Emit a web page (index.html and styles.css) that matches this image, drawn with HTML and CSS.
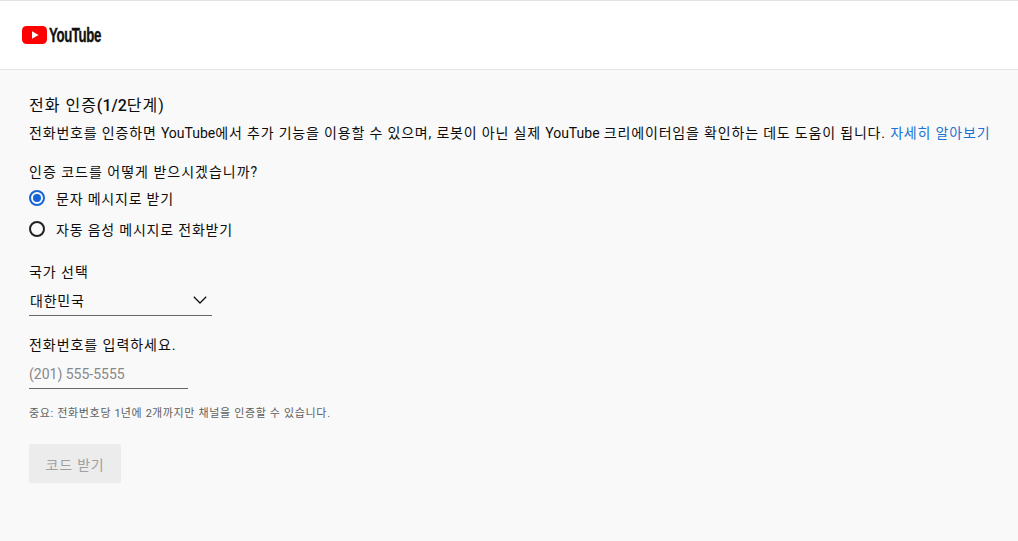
FILE: index.html
```html
<!DOCTYPE html>
<html lang="ko">
<head>
  <meta charset="UTF-8">
  <title>전화 인증</title>
  <link rel="stylesheet" href="styles.css">
</head>
<body>

  <header class="topBar">
    <a class="logo" href="#">
      <svg class="logoMark" width="25" height="18" viewBox="0 0 25 18">
        <rect width="25" height="18" rx="4.5" fill="#f00"/>
        <path d="M10 5.2v7.6L16.6 9z" fill="#fff"/>
      </svg>
      <span class="logoText">YouTube</span>
    </a>
  </header>

  <main class="content">
    <h1 class="title">전화 인증<span class="latin">(1/2</span>단계)</h1>
    <p class="intro">전화번호를 인증하면 <span class="latin">YouTube</span>에서 추가 기능을 이용할 수 있으며, 로봇이 아닌 실제 <span class="latin">YouTube</span> 크리에이터임을 확인하는 데도 도움이 됩니다. <a href="#">자세히 알아보기</a></p>

    <p class="label methodLabel">인증 코드를 어떻게 받으시겠습니까?</p>
    <div class="radioRow">
      <span class="radio checked"></span>
      <span>문자 메시지로 받기</span>
    </div>
    <div class="radioRow">
      <span class="radio"></span>
      <span>자동 음성 메시지로 전화받기</span>
    </div>

    <p class="label countryLabel">국가 선택</p>
    <div class="countrySelect">
      <span>대한민국</span>
      <svg width="14" height="8" viewBox="0 0 14 8"><path d="M.8.8 7 7l6.2-6.2" fill="none" stroke="#111" stroke-width="1.3"/></svg>
    </div>

    <p class="label phoneLabel">전화번호를 입력하세요.</p>
    <div class="phoneInput">(201) 555-5555</div>

    <p class="note">중요: 전화번호당 <span class="latin">1</span>년에 <span class="latin">2</span>개까지만 채널을 인증할 수 있습니다.</p>

    <button class="submitBtn" disabled>코드 받기</button>
  </main>

</body>
</html>
```

FILE: styles.css
```css
html, body {
  height: 100%;
}
body {
  margin: 0;
  background: #f9f9f9;
  color: #0d0d0d;
  font-family: Roboto, "Noto Sans CJK KR", sans-serif;
  font-size: 14px;
  overflow: hidden;
}
p, h1 {
  margin: 0;
}
.latin {
  letter-spacing: 0;
}
.topBar {
  height: 68px;
  background: #fff;
  border-top: 1px solid #e2e2e2;
  border-bottom: 1px solid #e2e2e2;
  display: flex;
  align-items: center;
  padding-left: 22px;
}
.logo {
  display: flex;
  align-items: center;
  gap: 2px;
  text-decoration: none;
  color: #111;
  margin-top: -1px;
}
.logoMark {
  display: block;
}
.logoText {
  display: block;
  width: 52px;
  font-family: "Liberation Sans", sans-serif;
  font-size: 21px;
  font-weight: 700;
  letter-spacing: -0.6px;
  line-height: 24px;
  -webkit-text-stroke: 0.4px #111;
  transform: scaleX(0.63);
  transform-origin: left center;
}
.content {
  padding: 25px 29px 0;
}
.title {
  font-size: 16px;
  font-weight: 400;
  line-height: 22px;
  letter-spacing: 1px;
}
.title .latin {
  font-weight: 500;
}
.intro {
  line-height: 20px;
  margin-top: 6px;
  white-space: nowrap;
  letter-spacing: 0.82px;
}
.intro a {
  color: #1a73d4;
  text-decoration: none;
}
.label {
  line-height: 20px;
  letter-spacing: 0.95px;
}
.methodLabel {
  margin-top: 19px;
  letter-spacing: 1px;
}
.radioRow {
  display: flex;
  align-items: center;
  gap: 11px;
  height: 20px;
  margin-top: 11px;
  letter-spacing: 0.8px;
}
.methodLabel + .radioRow {
  margin-top: 6px;
}
.radio {
  width: 12px;
  height: 12px;
  border: 2px solid #212121;
  border-radius: 50%;
  flex: none;
  position: relative;
}
.radio.checked {
  border-color: #1565d8;
}
.radio.checked::after {
  content: "";
  position: absolute;
  inset: 2px;
  border-radius: 50%;
  background: #1565d8;
}
.countryLabel {
  margin-top: 23px;
}
.countrySelect {
  width: 183px;
  height: 31px;
  box-sizing: border-box;
  border-bottom: 1px solid #666;
  display: flex;
  align-items: center;
  justify-content: space-between;
  padding: 0 5px 1px 1px;
  margin-top: 3px;
  letter-spacing: 0.75px;
}
.phoneLabel {
  margin-top: 19px;
}
.phoneInput {
  width: 159px;
  height: 30px;
  box-sizing: border-box;
  border-bottom: 1px solid #666;
  color: #888;
  line-height: 30px;
  margin-top: 4px;
}
.note {
  font-size: 11px;
  line-height: 16px;
  color: #606060;
  margin-top: 17px;
  letter-spacing: 0.66px;
}
.submitBtn {
  display: block;
  width: 92px;
  height: 39px;
  margin-top: 22px;
  border: none;
  border-radius: 2px;
  background: #ececec;
  color: #a0a0a0;
  font: inherit;
  letter-spacing: 0.8px;
}
```
